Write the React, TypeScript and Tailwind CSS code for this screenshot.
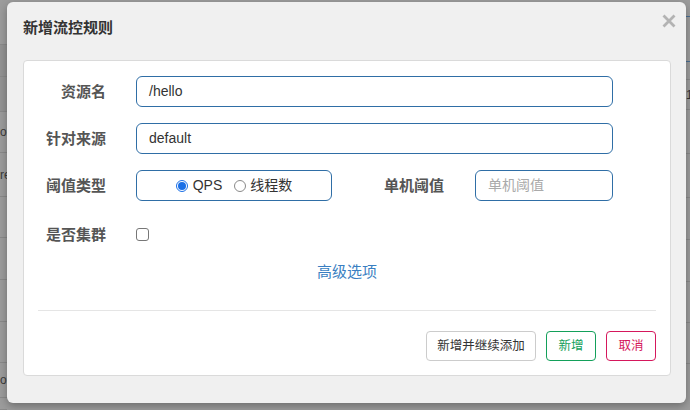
import React from "react";

const font = { fontFamily: '"Liberation Sans", "Noto Sans CJK SC", sans-serif' };

function Label({ children, w = "w-[82px]" }: { children: React.ReactNode; w?: string }) {
  return (
    <div className={`${w} shrink-0 text-right text-[15px] font-bold leading-[20px] text-[#555]`}>{children}</div>
  );
}

export default function App() {
  const leftRows = [
    { h: "h-[45px]", t: "", bg: "" },
    { h: "h-[32px]", t: "", bg: "bg-[#939393]" },
    { h: "h-[35px]", t: "", bg: "bg-[#949494]" },
    { h: "h-[41px]", t: "ol", bg: "" },
    { h: "h-[44px]", t: "re", bg: "" },
    { h: "h-[41px]", t: "", bg: "" },
    { h: "h-[42px]", t: "", bg: "" },
    { h: "h-[42px]", t: "", bg: "" },
    { h: "h-[41px]", t: "", bg: "" },
    { h: "h-[35px]", t: "o", bg: "" },
    { h: "h-[12px]", t: "", bg: "" },
  ];
  return (
    <div className="relative w-[690px] h-[410px] overflow-hidden bg-[#9c9c9c]" style={font}>
      {/* backdrop table fragments */}
      <div className="flex h-full">
        <div className="w-[7px] flex flex-col overflow-hidden">
          {leftRows.map((r, i) => (
            <div
              key={i}
              className={`${r.h} ${r.bg} shrink-0 border-b border-[#8a8a8a] flex items-center overflow-hidden whitespace-nowrap text-[12px] text-[#3a3a3a]`}
            >
              {r.t}
            </div>
          ))}
        </div>
        <div className="flex-1" />
        <div className="w-[4px] flex flex-col overflow-hidden">
          <div className="h-[17px] shrink-0 border-b border-[#4a6f94]" />
          <div className="h-[45px] shrink-0 border-b border-[#4a6f94]" />
          <div className="h-[18px] shrink-0 border-b border-[#8a8a8a]" />
          <div className="h-[30px] shrink-0 border-b border-[#8a8a8a] text-[12px] text-[#333] leading-[30px]">1</div>
          <div className="h-[44px] shrink-0 border-b border-[#8a8a8a]" />
          <div className="h-[44px] shrink-0 border-b border-[#8a8a8a]" />
          <div className="h-[42px] shrink-0 border-b border-[#8a8a8a]" />
          <div className="h-[42px] shrink-0 border-b border-[#8a8a8a]" />
          <div className="h-[41px] shrink-0 border-b border-[#8a8a8a]" />
          <div className="h-[41px] shrink-0 border-b border-[#8a8a8a]" />
        </div>
      </div>

      {/* modal */}
      <div className="absolute left-[7px] top-[2px] w-[679px] h-[401px] rounded-[6px] bg-[#f0f0f0] shadow-[0_3px_8px_rgba(0,0,0,0.3)] flex flex-col">
        <div className="h-[58px] shrink-0 pt-[16px] pl-[16px] text-[15px] font-bold leading-[20px] text-[#333]">
          新增流控规则
        </div>
        <div className="absolute right-[10px] top-[12px] w-[14px] h-[14px]">
          <svg width="14" height="14" viewBox="0 0 14 14">
            <path d="M1.5 1.5 L12.5 12.5 M12.5 1.5 L1.5 12.5" stroke="#b3b3b3" strokeWidth="2.8" strokeLinecap="butt" />
          </svg>
        </div>

        <div className="ml-[16px] w-[648px] h-[316px] shrink-0 rounded-[4px] border border-[#dadada] bg-white flex flex-col pt-[15px]">
          {/* row 1 */}
          <div className="flex items-center h-[31px]">
            <Label>资源名</Label>
            <div className="ml-[30px] w-[477px] h-[31px] rounded-[6px] border border-[#2f6ea6] px-[12px] flex items-center text-[14px] text-[#333]">
              /hello
            </div>
          </div>
          {/* row 2 */}
          <div className="flex items-center h-[31px] mt-[16px]">
            <Label>针对来源</Label>
            <div className="ml-[30px] w-[477px] h-[31px] rounded-[6px] border border-[#2f6ea6] px-[12px] flex items-center text-[14px] text-[#333]">
              default
            </div>
          </div>
          {/* row 3 */}
          <div className="flex items-center h-[31px] mt-[16px]">
            <Label>阈值类型</Label>
            <div className="ml-[30px] w-[196px] h-[31px] rounded-[6px] border border-[#2f6ea6] flex items-center justify-center text-[14px] text-[#333]">
              <span className="w-[12px] h-[12px] rounded-full border border-[#1a6fe6] flex items-center justify-center">
                <span className="w-[8px] h-[8px] rounded-full bg-[#1a6fe6]" />
              </span>
              <span className="ml-[5px]">QPS</span>
              <span className="ml-[12px] w-[12px] h-[12px] rounded-full border border-[#8a8a8a] bg-white" />
              <span className="ml-[4px]">线程数</span>
            </div>
            <Label w="w-[112px]">单机阈值</Label>
            <div className="ml-[31px] w-[138px] h-[31px] rounded-[6px] border border-[#2f6ea6] px-[12px] flex items-center text-[14px] text-[#aaa]">
              单机阈值
            </div>
          </div>
          {/* row 4 */}
          <div className="flex items-center h-[31px] mt-[18px]">
            <Label>是否集群</Label>
            <span className="ml-[30px] w-[13px] h-[13px] rounded-[3px] border border-[#777] bg-white" />
          </div>
          {/* advanced link */}
          <div className="mt-[12px] h-[20px] text-center text-[15px] leading-[20px] text-[#3a7fc2]">高级选项</div>
          {/* divider */}
          <div className="mt-[28px] mx-[14px] border-t border-[#e5e5e5]" />
          {/* buttons */}
          <div className="mt-[20px] pr-[14px] flex justify-end gap-[10px]">
            <div className="w-[110px] h-[30px] rounded-[4px] border border-[#cccccc] bg-white flex items-center justify-center text-[12.5px] text-[#333]">
              新增并继续添加
            </div>
            <div className="w-[50px] h-[30px] rounded-[4px] border border-[#13a05a] bg-white flex items-center justify-center text-[12.5px] text-[#13a05a]">
              新增
            </div>
            <div className="w-[50px] h-[30px] rounded-[4px] border border-[#d5175c] bg-white flex items-center justify-center text-[12.5px] text-[#d5175c]">
              取消
            </div>
          </div>
        </div>
      </div>
    </div>
  );
}
